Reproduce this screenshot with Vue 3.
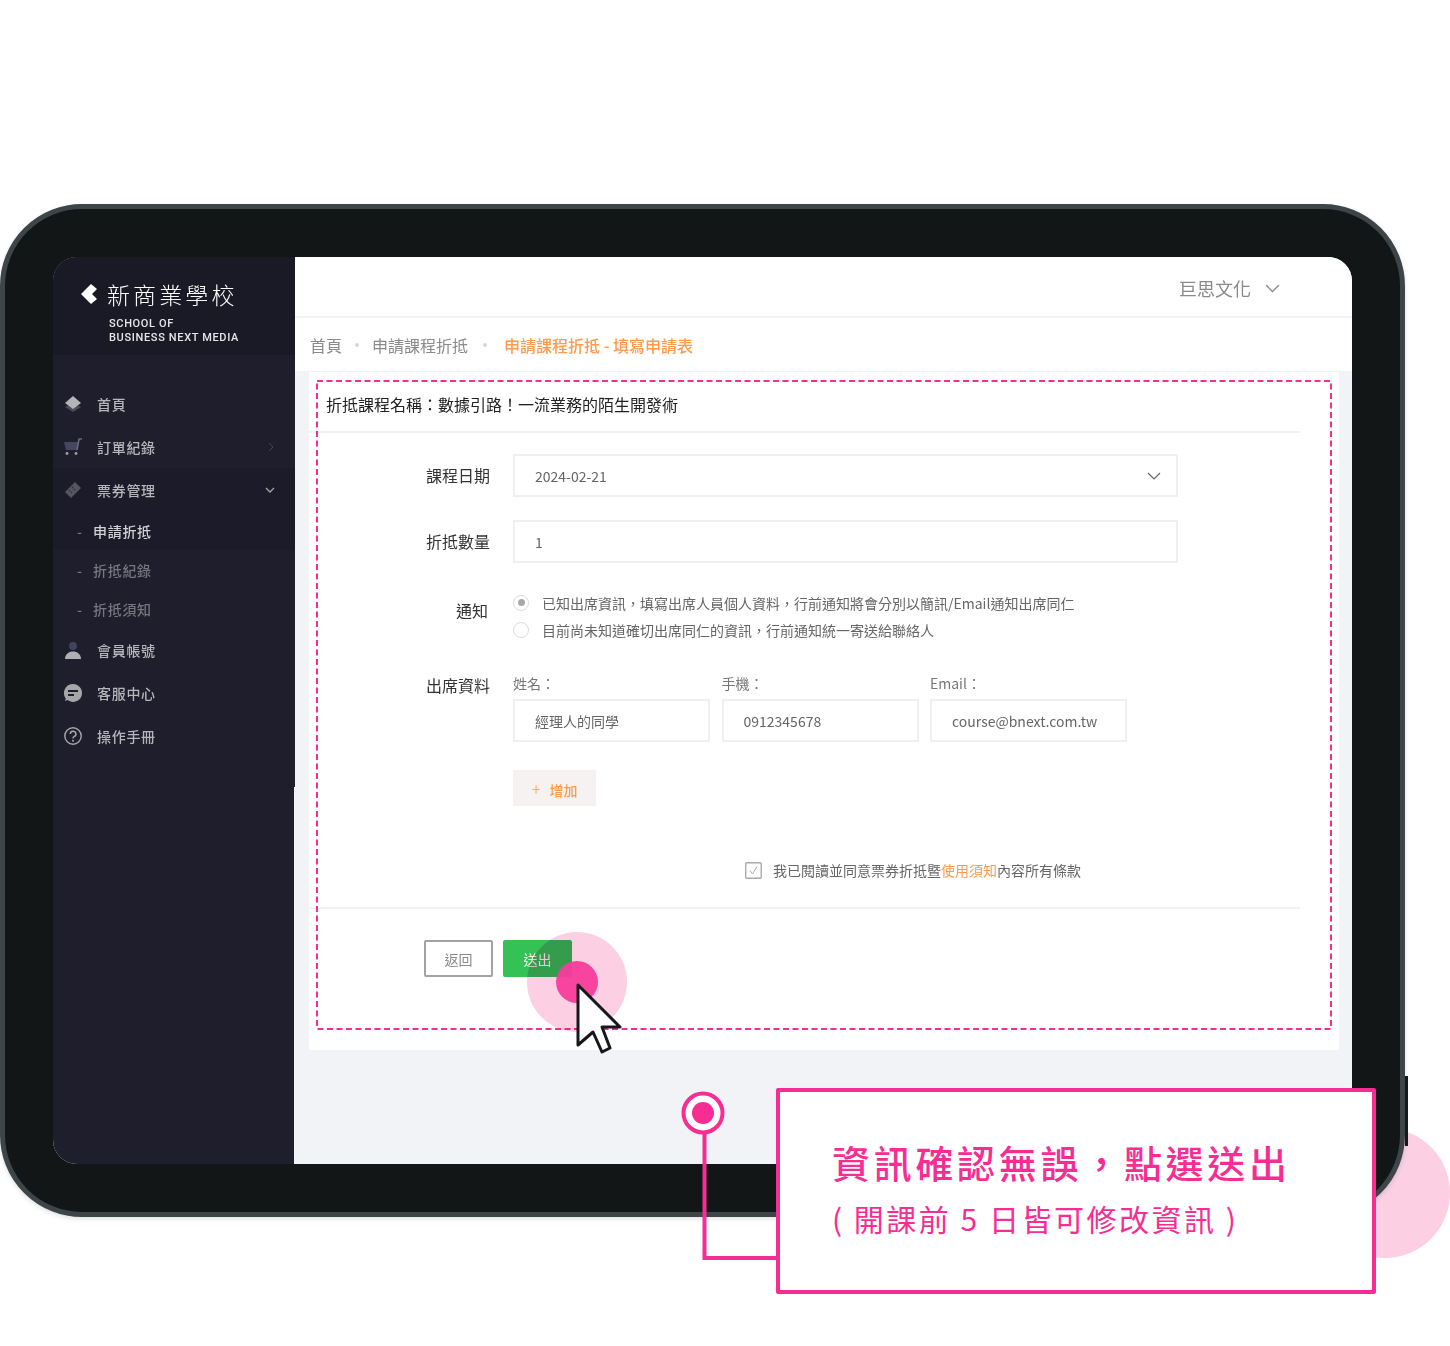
<script setup>
const menu = [
  { label: '首頁', icon: 'home' },
  { label: '訂單紀錄', icon: 'cart', arrow: 'right' },
  { label: '票券管理', icon: 'ticket', arrow: 'down', open: true },
  { label: '申請折抵', sub: true, active: true, open: true },
  { label: '折抵紀錄', sub: true },
  { label: '折抵須知', sub: true },
  { label: '會員帳號', icon: 'user' },
  { label: '客服中心', icon: 'chat' },
  { label: '操作手冊', icon: 'help' },
]

const contacts = [
  { label: '姓名：', value: '經理人的同學' },
  { label: '手機：', value: '0912345678' },
  { label: 'Email：', value: 'course@bnext.com.tw' },
]
</script>

<template>
  <div class="page">
    <div class="blob"></div>
    <div class="device">
      <div class="side-button"></div>
      <div class="screen">
        <aside class="sidebar">
          <div class="brand">
            <div class="brand-top">
              <svg width="17" height="21" viewBox="0 0 17 21">
                <path d="M0 10 10 0 16 5 11 10 16 15 10 20Z" fill="#fff" />
              </svg>
              <span class="brand-zh">新商業學校</span>
            </div>
            <div class="brand-en">SCHOOL OF<br />BUSINESS NEXT MEDIA</div>
          </div>
          <nav class="menu">
            <div
              v-for="item in menu"
              :key="item.label"
              class="menu-row"
              :class="{ sub: item.sub, active: item.active, open: item.open }"
            >
              <span v-if="item.sub" class="dash">-</span>
              <span v-else class="menu-icon">
                <svg v-if="item.icon === 'home'" width="18" height="18" viewBox="0 0 18 18">
                  <path d="M1 12 9 17 17 12 9 8Z" fill="#4b4b5a" />
                  <path d="M1 8 9 1 17 8 9 14Z" fill="#b4b4b8" />
                </svg>
                <svg v-else-if="item.icon === 'cart'" width="19" height="18" viewBox="0 0 19 18">
                  <path d="M0 4H14L13 12H2Z" fill="#45465f" />
                  <path d="M13 12 15 1H18" fill="none" stroke="#6a6a74" stroke-width="1.6" />
                  <circle cx="3" cy="15.5" r="1.4" fill="#a0a0a4" />
                  <circle cx="12" cy="15.5" r="1.4" fill="#a0a0a4" />
                </svg>
                <svg v-else-if="item.icon === 'ticket'" width="18" height="18" viewBox="0 0 18 18">
                  <path d="M1 11 11 1 13 3 15 5 17 7 7 17 5 15 3 13Z" fill="#55555f" />
                  <path d="M5 9 9 13M8 6 12 10" stroke="#2c2c3a" stroke-width="1.4" stroke-dasharray="1.4 1.4" />
                </svg>
                <svg v-else-if="item.icon === 'user'" width="18" height="18" viewBox="0 0 18 18">
                  <circle cx="9" cy="5" r="4" fill="#3f4260" />
                  <path d="M1 18C1 13 5 10.500 9 10.500S17 13 17 18Z" fill="#b0b0b4" />
                </svg>
                <svg v-else-if="item.icon === 'chat'" width="18" height="18" viewBox="0 0 18 18">
                  <path d="M9 0A9 9 0 1 1 3.500 16.100L1 17 1.800 14.400A9 9 0 0 1 9 0Z" fill="#a6a6aa" />
                  <path d="M4 7H14M4 11H10" stroke="#1e1e2d" stroke-width="1.800" />
                </svg>
                <svg v-else-if="item.icon === 'help'" width="18" height="18" viewBox="0 0 18 18">
                  <circle cx="9" cy="9" r="8.200" fill="none" stroke="#a6a6aa" stroke-width="1.400" />
                  <path d="M6.300 7A2.800 2.800 0 1 1 10 9.600C9.200 10 9 10.500 9 11.500" fill="none" stroke="#a6a6aa" stroke-width="1.500" />
                  <circle cx="9" cy="13.700" r="1" fill="#a6a6aa" />
                </svg>
              </span>
              <span class="menu-label">{{ item.label }}</span>
              <svg v-if="item.arrow === 'right'" class="arrow" width="8" height="10" viewBox="0 0 8 10">
                <path d="M2 1 6 5 2 9" fill="none" stroke="#44444f" stroke-width="1" />
              </svg>
              <svg v-if="item.arrow === 'down'" class="arrow" width="10" height="8" viewBox="0 0 10 8">
                <path d="M1 2 5 6 9 2" fill="none" stroke="#a0a0a4" stroke-width="1.400" />
              </svg>
            </div>
          </nav>
        </aside>

        <main class="main">
          <header class="topbar">
            <span class="company">巨思文化</span>
            <svg width="15" height="9" viewBox="0 0 15 9">
              <path d="M1 1 7.500 7.500 14 1" fill="none" stroke="#888" stroke-width="1.300" />
            </svg>
          </header>
          <div class="crumbs">
            <span>首頁</span>
            <i class="dot"></i>
            <span>申請課程折抵</span>
            <i class="dot"></i>
            <span class="crumb-now">申請課程折抵 - 填寫申請表</span>
          </div>

          <div class="content">
            <section class="card">
              <h1 class="card-title">折抵課程名稱：數據引路！一流業務的陌生開發術</h1>

              <div class="form">
                <div class="form-row">
                  <label>課程日期</label>
                  <div class="field select">
                    2024-02-21
                    <svg width="14" height="8" viewBox="0 0 14 8">
                      <path d="M1 1 7 7 13 1" fill="none" stroke="#666" stroke-width="1.200" />
                    </svg>
                  </div>
                </div>
                <div class="form-row">
                  <label>折抵數量</label>
                  <div class="field">1</div>
                </div>
                <div class="form-row notice-row">
                  <label class="notice-label">通知</label>
                  <div class="radios">
                    <div class="radio-line">
                      <span class="radio checked"></span>
                      已知出席資訊，填寫出席人員個人資料，行前通知將會分別以簡訊/Email通知出席同仁
                    </div>
                    <div class="radio-line">
                      <span class="radio"></span>
                      目前尚未知道確切出席同仁的資訊，行前通知統一寄送給聯絡人
                    </div>
                  </div>
                </div>
                <div class="form-row people-row">
                  <label class="people-label">出席資料</label>
                  <div>
                    <div class="people">
                      <div v-for="c in contacts" :key="c.label" class="person">
                        <div class="person-label">{{ c.label }}</div>
                        <div class="field">{{ c.value }}</div>
                      </div>
                    </div>
                    <button class="add" type="button"><span class="plus">+</span>增加</button>
                  </div>
                </div>
              </div>

              <div class="agree">
                <svg width="17" height="17" viewBox="0 0 17 17">
                  <rect x=".75" y=".75" width="15.500" height="15.500" rx="1" fill="none" stroke="#aaa" stroke-width="1.400" />
                  <path d="M5 8.500 7.500 12 12 4.500" fill="none" stroke="#aaa" stroke-width="1" />
                </svg>
                <span>我已閱讀並同意票券折抵暨<em>使用須知</em>內容所有條款</span>
              </div>

              <div class="actions">
                <button class="btn back" type="button">返回</button>
                <button class="btn send" type="button">送出</button>
              </div>
            </section>
          </div>
        </main>
      </div>
    </div>

    <!-- annotations laid over the screenshot -->
    <svg class="overlay" width="1450" height="1346" viewBox="0 0 1450 1346">
      <rect x="317" y="381" width="1014" height="648" fill="none" stroke="#f72d93" stroke-width="2" stroke-dasharray="6 3.500" />
      <circle cx="577" cy="982" r="50" fill="#fccfe3" style="mix-blend-mode: multiply" />
      <circle cx="577" cy="982" r="21" fill="#f83c9b" fill-opacity=".95" />
      <path d="M578 985 620 1027H602L610 1048 602 1052 593 1032 578 1045Z" fill="#fff" stroke="#15181a" stroke-width="3" stroke-linejoin="round" />
      <path d="M704.500 1132V1258H778" fill="none" stroke="#f72d93" stroke-width="4" />
      <circle cx="703" cy="1113" r="19.500" fill="#fff" stroke="#f72d93" stroke-width="4" />
      <circle cx="703" cy="1113" r="11" fill="#f72d93" />
    </svg>

    <div class="callout">
      <div class="callout-main">資訊確認無誤，點選送出</div>
      <div class="callout-sub">( 開課前 5 日皆可修改資訊 )</div>
    </div>
  </div>
</template>

<style scoped>
.page {
  position: relative;
  width: 1450px;
  height: 1346px;
  padding-top: 204px;
  box-sizing: border-box;
  overflow: hidden;
  background: #fff;
  font-family: "Noto Sans CJK TC", "Noto Sans", sans-serif;
  color: #666;
}

.blob {
  position: absolute;
  left: 1320px;
  top: 1128px;
  width: 130px;
  height: 130px;
  border-radius: 50% 0 0 50%;
  border-top-right-radius: 65px;
  border-bottom-right-radius: 65px;
  background: #fccfe3;
}

.device {
  position: relative;
  width: 1405px;
  height: 1013px;
  box-sizing: border-box;
  padding: 48px;
  border: 5px solid #3d4548;
  border-radius: 82px;
  background: #121617;
  box-shadow: 0 2px 5px rgba(0, 0, 0, .12);
}

.side-button {
  position: absolute;
  right: -8px;
  top: 867px;
  width: 3px;
  height: 70px;
  background: #16191b;
}

.screen {
  display: flex;
  height: 907px;
  width: 1299px;
  border-radius: 24px;
  overflow: hidden;
  background: #f2f3f7;
}

.sidebar {
  position: relative;
  z-index: 1;
  flex: 0 0 241px;
  background: #1e1e2d;
}

.brand {
  height: 98px;
  margin-right: -1px;
  box-sizing: border-box;
  padding: 21px 0 0 28px;
  background: #1a1a27;
  color: #fff;
}

.brand-top {
  display: flex;
  align-items: center;
  height: 32px;
}

.brand-zh {
  margin-left: 9px;
  font-size: 23px;
  font-weight: 300;
  letter-spacing: 3.100px;
  line-height: 32px;
}

.brand-en {
  margin: 7px 0 0 28px;
  font-family: Roboto, sans-serif;
  font-size: 11px;
  font-weight: 500;
  line-height: 13.500px;
  letter-spacing: .65px;
  color: #e6e6e8;
}

.menu {
  padding-top: 27px;
  margin-right: -1px;
  height: 405px;
  background: #1e1e2d;
}

.menu-row {
  display: flex;
  align-items: center;
  height: 43px;
  padding: 0 20px 0 11px;
  font-size: 14px;
  letter-spacing: .7px;
  font-weight: 500;
  color: #b6b6ba;
}

.menu-row.open {
  background: #1b1b29;
}

.menu-row.sub {
  height: 39px;
  padding-left: 24px;
  color: #76767e;
}

.menu-row.active {
  color: #d2d2d6;
}

.dash {
  width: 16px;
  color: #77777f;
}

.menu-icon {
  display: flex;
  align-items: center;
  width: 33px;
}

.arrow {
  margin-left: auto;
}

.main {
  flex: 1;
  min-width: 0;
  display: flex;
  flex-direction: column;
}

.topbar {
  height: 61px;
  flex: none;
  box-sizing: border-box;
  display: flex;
  align-items: center;
  justify-content: flex-end;
  gap: 14px;
  padding: 3px 72px 0 0;
  background: #fff;
  border-bottom: 2px solid #f3f3f5;
  margin-left: 1px;
}

.company {
  font-size: 18px;
  color: #8a8a8a;
}

.crumbs {
  height: 53px;
  flex: none;
  display: flex;
  align-items: center;
  margin-left: 1px;
  padding-left: 15px;
  box-sizing: border-box;
  background: #fff;
  font-size: 16px;
  color: #8a8a8a;
}

.dot {
  width: 4px;
  height: 4px;
  margin: 0 13px 0 13px;
  border-radius: 50%;
  background: #d8d8d8;
}

.crumbs .dot:nth-of-type(2) {
  margin: 0 17px 0 15px;
}

.crumb-now {
  font-weight: 500;
  color: #ff9a4f;
}

.content {
  flex: 1;
  padding: 1px 13px 0 15px;
}

.card {
  height: 678px;
  background: #fff;
}

.card-title {
  height: 61px;
  margin: 0 39px 0 0;
  padding: 20px 0 0 17px;
  box-sizing: border-box;
  border-bottom: 2px solid #f2f2f4;
  font-size: 16px;
  line-height: 24px;
  font-weight: 400;
  color: #222;
}

.form {
  padding-top: 21px;
}

.form-row {
  display: grid;
  grid-template-columns: 181px 665px;
  column-gap: 23px;
  margin-bottom: 23px;
}

.form-row label {
  font-size: 16px;
  line-height: 43px;
  text-align: right;
  color: #333;
}

.field {
  height: 43px;
  box-sizing: border-box;
  padding: 0 20px;
  display: flex;
  align-items: center;
  justify-content: space-between;
  border: 2px solid #f0f0f2;
  font-size: 14px;
  color: #666;
}

.select svg {
  margin-right: -5px;
}

.notice-row {
  margin-bottom: 0;
}

.form-row .notice-label {
  padding-right: 2px;
  line-height: 22px;
  padding-top: 13px;
}

.radios {
  padding-top: 3px;
}

.radio-line {
  display: flex;
  align-items: center;
  height: 27px;
  font-size: 14px;
  color: #666;
}

.radio {
  width: 16px;
  height: 16px;
  margin-right: 13px;
  box-sizing: border-box;
  border: 1.500px solid #dcdcdc;
  border-radius: 50%;
  display: flex;
  align-items: center;
  justify-content: center;
}

.radio.checked::after {
  content: "";
  width: 7px;
  height: 7px;
  border-radius: 50%;
  background: #a8a8a8;
}

.people-row {
  margin-top: 30px;
  margin-bottom: 0;
}

.form-row .people-label {
  line-height: 24px;
  padding-top: 0;
}

.people {
  display: flex;
  gap: 11.500px;
}

.person {
  width: 197px;
}

.person-label {
  height: 26px;
  line-height: 20px;
  font-size: 14px;
  color: #777;
}

.add {
  display: block;
  width: 83px;
  height: 36px;
  margin-top: 28px;
  padding: 0;
  border: 0;
  background: #f6f2f2;
  font: 500 14px "Noto Sans CJK TC", sans-serif;
  color: #ff9a4f;
}

.plus {
  margin-right: 9px;
  font-weight: 300;
  font-size: 17px;
}

.agree {
  display: flex;
  align-items: center;
  gap: 11px;
  height: 20px;
  margin: 54px 0 0 436px;
  font-size: 14px;
  color: #666;
}

.agree em {
  font-style: normal;
  color: #ff9a4f;
}

.actions {
  display: flex;
  gap: 10px;
  margin: 27px 39px 0 0;
  padding: 31px 0 0 115px;
  border-top: 2px solid #f2f2f4;
}

.btn {
  width: 69px;
  height: 37px;
  padding: 0;
  border-radius: 2px;
  font: 14px "Noto Sans CJK TC", sans-serif;
}

.back {
  background: #fff;
  border: 2px solid #a2a2a2;
  color: #8a8a8a;
}

.send {
  border: 0;
  background: #34c156;
  color: #e9f8ec;
}

.overlay {
  position: absolute;
  left: 0;
  top: 0;
  pointer-events: none;
}

.callout {
  position: absolute;
  left: 776px;
  top: 1088px;
  width: 600px;
  height: 206px;
  box-sizing: border-box;
  padding: 42px 0 0 52px;
  border: 4px solid #f72d93;
  border-radius: 2px;
  background: #fff;
  color: #f72d93;
}

.callout-main {
  height: 56px;
  font-size: 38px;
  line-height: 56px;
  letter-spacing: 3.700px;
  font-weight: 500;
  white-space: nowrap;
}

.callout-sub {
  margin-top: 3px;
  font-size: 30px;
  line-height: 50px;
  letter-spacing: 2.500px;
  white-space: nowrap;
}
</style>
